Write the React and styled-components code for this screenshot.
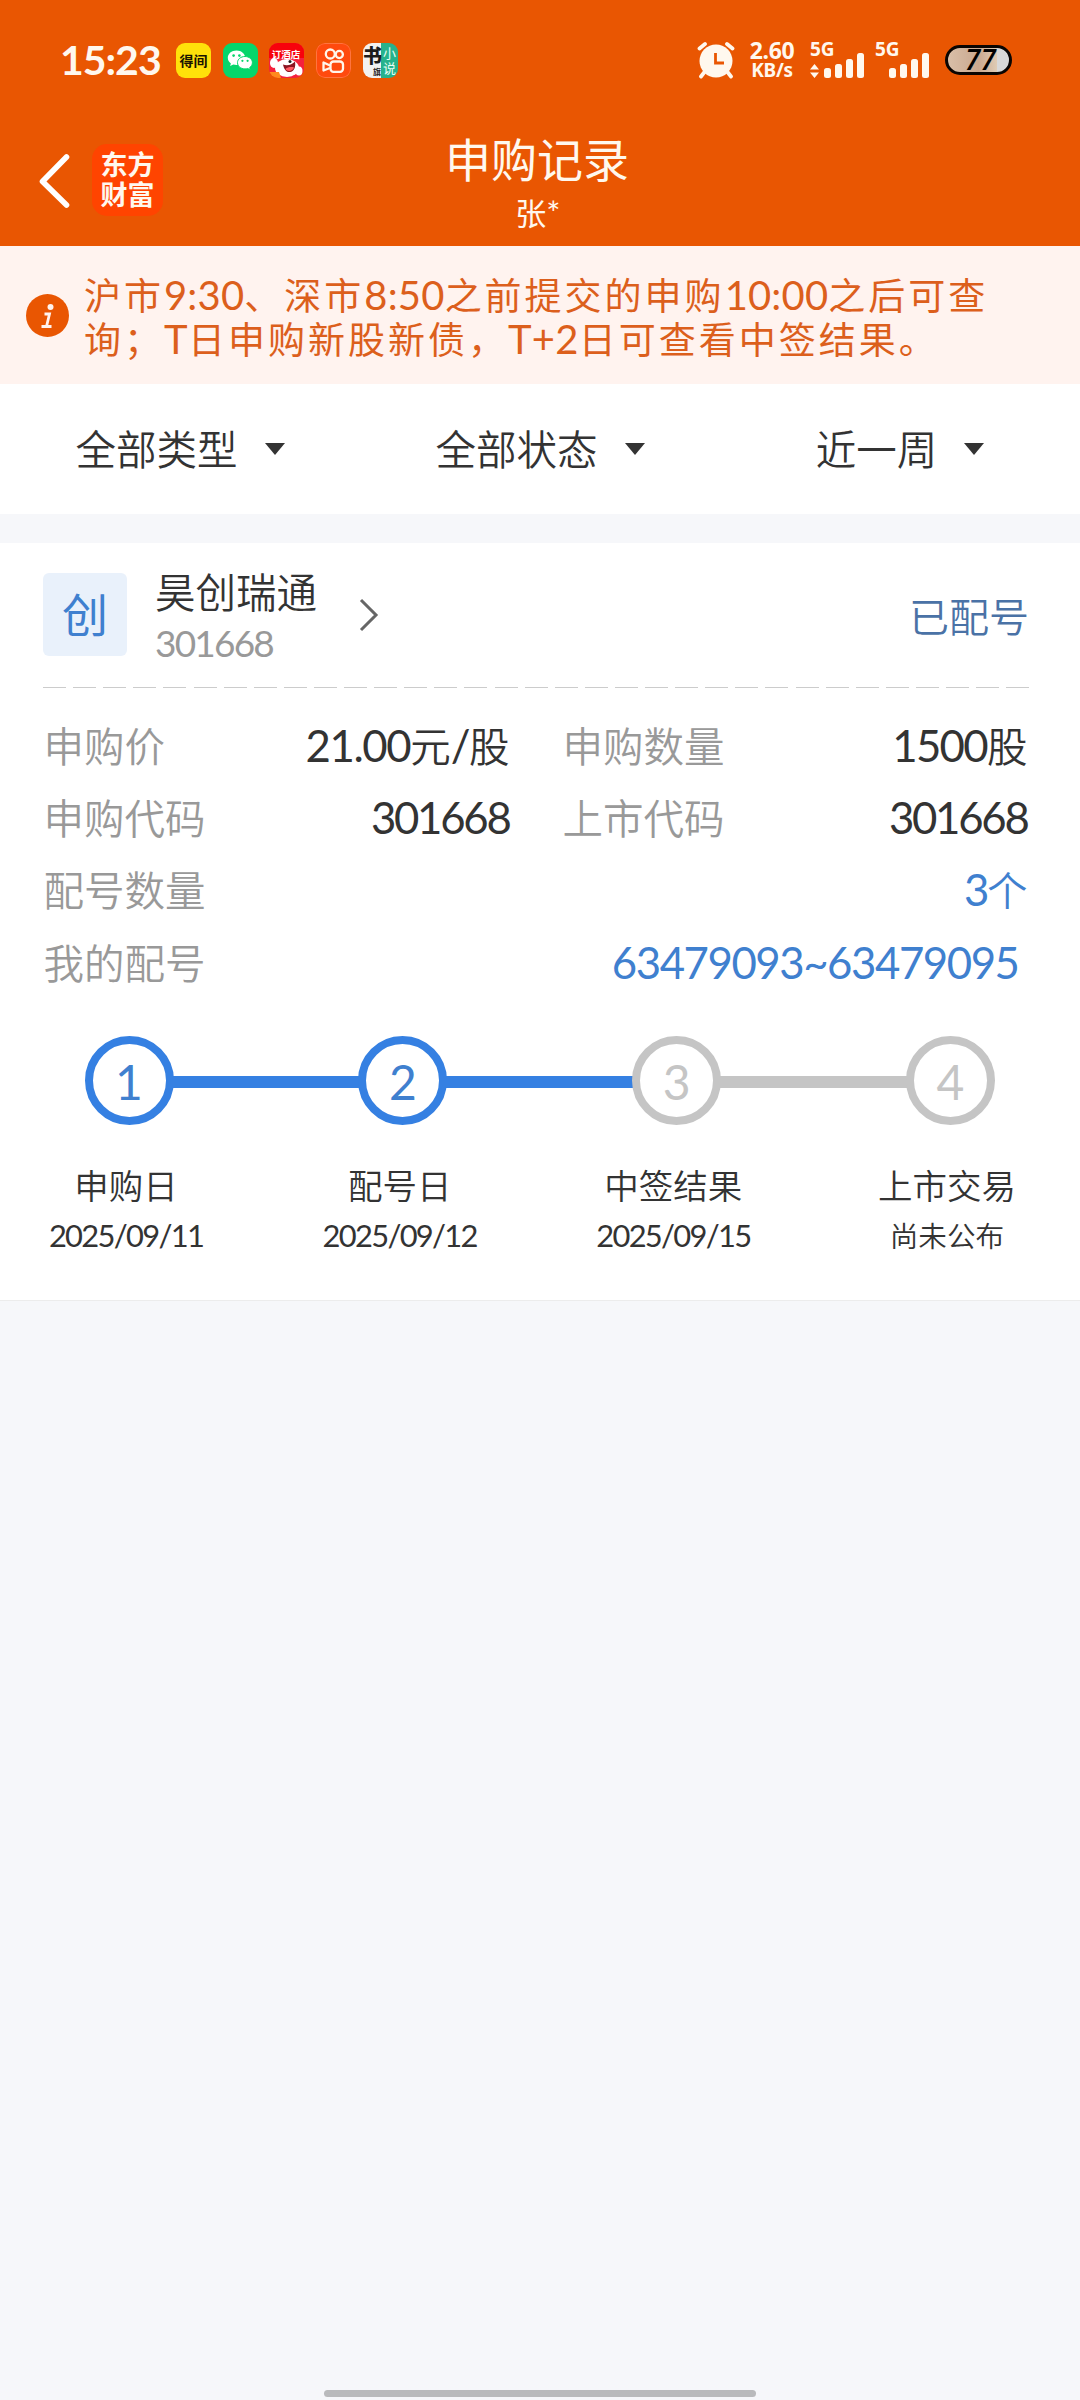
import React from 'react';
import styled, { createGlobalStyle } from 'styled-components';

const GlobalStyle = createGlobalStyle`
  * {
    box-sizing: border-box;
  }
  body {
    margin: 0;
    background: #f6f7fa;
    font-family: 'Noto Sans CJK SC', sans-serif;
    font-weight: 350;
    color: #333;
  }
`;

const Page = styled.div`
  display: flex;
  flex-direction: column;
  width: 1080px;
  height: 2400px;
  overflow: hidden;
  background: #f6f7fa;
`;

// Latin letters and digits inside Chinese text
const Latin = styled.span`
  font-family: Lato, sans-serif;
  font-size: 1.08em;
  font-weight: 400;
  line-height: 0;
  letter-spacing: ${(p) => p.$spacing || '-0.052em'};
`;

const Mixed = ({ children, spacing }) =>
  children
    .split(/([\dA-Z:./~*+]+)/)
    .filter(Boolean)
    .map((part, i) =>
      /^[\dA-Z:./~*+]/.test(part) ? (
        <Latin key={i} $spacing={spacing}>{part}</Latin>
      ) : (
        <React.Fragment key={i}>{part}</React.Fragment>
      )
    );

// Header
const Header = styled.header`
  height: 246px;
  background: #e95602;
  color: #fff8ee;
`;

const StatusBar = styled.div`
  display: flex;
  align-items: center;
  height: 120px;
  padding: 0 68px 0 60px;
`;

const Clock = styled.div`
  width: 116px;
  font: 700 41px/44px Lato, sans-serif;
  letter-spacing: -1px;
  white-space: nowrap;
`;

const AppIcons = styled.div`
  display: flex;
  gap: 11.7px;
`;

const StatusRight = styled.div`
  display: flex;
  align-items: center;
  margin-left: auto;
`;

const Speed = styled.div`
  width: 50px;
  margin: 0 13px 0 12px;
  text-align: center;
  font: 700 23px/20px 'Noto Sans', sans-serif;
  letter-spacing: -0.3px;
  white-space: nowrap;
`;

const SpeedUnit = styled.div`
  font-size: 19px;
  line-height: 20px;
`;

const Signal = styled.div`
  display: grid;
  width: 54px;
  height: 36px;
  margin-right: ${(p) => p.$gap}px;

  > * {
    grid-area: 1 / 1;
  }
`;

const Network = styled.span`
  font: 700 19px/15px 'Noto Sans', sans-serif;
`;

const Battery = styled.div`
  width: 67px;
  height: 30px;
  padding-left: 17px;
  border: 3px solid #0a0502;
  border-radius: 15px;
  background: linear-gradient(90deg, #d9bfa8 0, #c9a88f 50%, #dfcbb4 80%, #d8d8d8 80%);
  color: #000;
  font: italic 600 28px/23px 'Open Sans', sans-serif;
`;

const TitleBar = styled.div`
  display: grid;
  grid-template-columns: 200px 1fr 206px;
  height: 126px;
`;

const NavLeft = styled.div`
  display: flex;
  align-items: center;
  height: 72px;
  margin-top: 24px;
  padding-left: 38px;
`;

const Logo = styled.div`
  display: grid;
  place-content: center;
  width: 71px;
  height: 72px;
  margin-left: 20px;
  padding-bottom: 2px;
  border-radius: 15px;
  background: #ff4400;
  font-size: 27px;
  font-weight: 700;
  line-height: 30px;
`;

const Titles = styled.div`
  text-align: center;
`;

const Title = styled.h1`
  margin: 9px 0 0;
  font-size: 46px;
  font-weight: 400;
  line-height: 56px;
`;

const Account = styled.div`
  margin-top: 7px;
  font-size: 31px;
  font-weight: 400;
  line-height: 40px;
`;

// Notice
const Notice = styled.div`
  display: flex;
  align-items: center;
  height: 138px;
  padding: 0 26px;
  background: #fff3ef;
  color: #dc5f1c;
`;

const NoticeText = styled.p`
  margin: 1px 0 0 15px;
  font-size: 37px;
  font-weight: 400;
  line-height: 44px;
  letter-spacing: 3px;
  white-space: nowrap;
`;

// Filters
const Filters = styled.div`
  display: grid;
  grid-template-columns: repeat(3, 1fr);
  height: 130px;
  background: #fff;
`;

const Filter = styled.div`
  display: flex;
  align-items: center;
  justify-content: center;
  gap: 27px;
  font-size: 40.5px;
`;

const FilterName = styled.span`
  padding-bottom: 3px;
`;

const Caret = styled.i`
  border: 10px solid transparent;
  border-top: 12px solid #333;
  border-bottom: 0;
`;

// Record card
const Card = styled.section`
  height: 758px;
  margin-top: 29px;
  border-bottom: 1px solid #ececec;
  background: #fff;
`;

const CardHead = styled.div`
  display: flex;
  height: 144px;
  margin: 0 51px 0 43px;
  padding-top: 30px;
`;

const Badge = styled.div`
  width: 84px;
  height: 83px;
  border-radius: 6px;
  background: #e9f1fb;
  color: #3f80cf;
  text-align: center;
  font-size: 46px;
  font-weight: 400;
  line-height: 78px;
`;

const Stock = styled.div`
  width: 203px;
  margin: -10px 0 0 28px;
`;

const StockName = styled.div`
  font-size: 40.5px;
  line-height: 56px;
`;

const StockCode = styled.div`
  color: #999;
  font: 400 37px/48px Lato, sans-serif;
  letter-spacing: -1.8px;
`;

const Arrow = styled.svg`
  margin-top: 24px;
`;

const State = styled.div`
  margin-left: auto;
  color: #4a72a6;
  font-size: 40px;
  line-height: 85px;
`;

const Dashes = styled.div`
  height: 1px;
  margin: 0 51px 0 43px;
  background: repeating-linear-gradient(90deg, #ccc 0 23px, transparent 23px 30.1px);
`;

const Fields = styled.div`
  display: grid;
  grid-template-columns: 466px 465px;
  column-gap: 53px;
  grid-auto-rows: 72.3px;
  margin: 20.5px 0 0 43.5px;
`;

const Field = styled.div`
  display: flex;
  align-items: center;
  justify-content: space-between;
  grid-column: ${(p) => (p.$wide ? '1 / -1' : 'auto')};
  padding-right: ${(p) => p.$inset || 0}px;
  font-size: 40.5px;
  line-height: 60px;
  white-space: nowrap;
`;

const Label = styled.span`
  color: #999;
`;

const Value = styled.span`
  color: ${(p) => (p.$link ? '#3f80cf' : '#333')};
`;

// Progress
const Track = styled.div`
  display: flex;
  align-items: center;
  margin: 38.5px 0 0 84.5px;
`;

const Node = styled.div`
  width: 89px;
  height: 89px;
  border: 8.5px solid ${(p) => (p.$done ? '#3580e2' : '#c5c5c5')};
  border-radius: 50%;
  color: ${(p) => (p.$done ? '#3f80cf' : '#c5c5c5')};
  text-align: center;
  font: 400 48px/75px Lato, sans-serif;
`;

const Line = styled.div`
  width: 186.8px;
  height: 12px;
  margin: 2px -1px 0;
  background: ${(p) => (p.$done ? '#3580e2' : '#c5c5c5')};
`;

const StepLabels = styled.div`
  display: flex;
  justify-content: space-between;
  margin: 32px 33px 0 26px;
`;

const StepLabel = styled.div`
  width: 200px;
  text-align: center;
  font-size: 34.5px;
  line-height: 54px;
`;

const StepDate = styled.div`
  margin-top: 1px;
  font-size: 28.6px;
  line-height: 46px;
  white-space: nowrap;
`;

const HomeIndicator = styled.div`
  width: 432px;
  height: 7px;
  margin: auto auto 3px;
  border-radius: 4px;
  background: #b9babc;
`;

const Tile = ({ children }) => (
  <svg width="35" height="35" viewBox="0 0 35 35">
    <defs>
      <clipPath id="tile">
        <rect width="35" height="35" rx="9" />
      </clipPath>
    </defs>
    <g clipPath="url(#tile)">{children}</g>
  </svg>
);

const SignalBars = ({ arrows }) => (
  <svg width="54" height="36" viewBox="0 0 54 36" fill="#fff8ee">
    {arrows && <path d="M4.5 22 9 27.5H0zM4.5 36 9 30.5H0z" />}
    <rect x="14" y="26" width="7" height="10" rx="2.5" />
    <rect x="25" y="22" width="7" height="14" rx="2.5" />
    <rect x="36" y="17" width="7" height="19" rx="2.5" />
    <rect x="47" y="11" width="7" height="25" rx="2.5" />
  </svg>
);

const fields = [
  { label: '申购价', value: '21.00元/股', spacing: '-0.033em' },
  { label: '申购数量', value: '1500股', spacing: '-0.038em' },
  { label: '申购代码', value: '301668' },
  { label: '上市代码', value: '301668' },
  { label: '配号数量', value: '3个', wide: true },
  { label: '我的配号', value: '63479093~63479095', wide: true, inset: 9, spacing: '-0.033em' },
];

const steps = [
  { name: '申购日', date: '2025/09/11', done: true },
  { name: '配号日', date: '2025/09/12', done: true },
  { name: '中签结果', date: '2025/09/15', done: false },
  { name: '上市交易', date: '尚未公布', done: false },
];

const App = () => {
  return (
    <Page>
      <GlobalStyle />
      <Header>
        <StatusBar>
          <Clock>15:23</Clock>
          <AppIcons>
            <Tile>
              <rect width="35" height="35" fill="#ffe10a" />
              <text x="17.5" y="22.5" textAnchor="middle" fontSize="14" fontWeight="700" fill="#1a1400">得间</text>
            </Tile>
            <Tile>
              <rect width="35" height="35" fill="#05d66b" />
              <path d="M13.5 7.5c-5 0-8.7 3.2-8.7 7.3 0 2.4 1.2 4.3 3.1 5.6l-.8 2.7 3.2-1.5c1 .3 2 .4 3.2.4 5 0 8.7-3.2 8.7-7.2s-3.7-7.3-8.7-7.3z" fill="#fff" />
              <path d="M22 13.5c-4.3 0-7.5 2.7-7.5 6.2s3.2 6.2 7.5 6.2c1 0 1.9-.1 2.7-.4l2.6 1.3-.6-2.3c1.7-1.2 2.7-2.9 2.7-4.8 0-3.5-3.2-6.2-7.4-6.2z" fill="#fff" stroke="#05d66b" />
              <g fill="#05d66b">
                <circle cx="10.6" cy="12.6" r="1.3" />
                <circle cx="16.4" cy="12.6" r="1.3" />
                <circle cx="19.4" cy="17.8" r="1.1" />
                <circle cx="24.6" cy="17.8" r="1.1" />
              </g>
            </Tile>
            <Tile>
              <rect width="35" height="35" fill="#f5213c" />
              <rect width="35" height="15" fill="#f8020c" />
              <ellipse cx="5" cy="20" rx="4" ry="5" fill="#fff" />
              <ellipse cx="18" cy="25" rx="12" ry="9" fill="#fff" />
              <ellipse cx="30" cy="28" rx="3.5" ry="4.5" fill="#fff" />
              <path d="M14 21.5c4 1.5 9 .5 12-3 1 6-1 10-5 10.5s-6-3-7-7.5z" fill="#8c1420" />
              <path d="M16.5 26c2-2 6-2.5 8.5-1.5-1 3.5-6.5 5-8.5 1.5z" fill="#ff5a62" />
              <circle cx="21" cy="18.5" r="1.5" fill="#222" />
              <path d="M0 29h10l2 6H0z" fill="#ff8a1c" />
              <text x="17" y="14.5" textAnchor="middle" fontSize="9.5" fontWeight="700" fill="#fff">订酒店</text>
            </Tile>
            <Tile>
              <rect width="35" height="35" fill="#ff4a0e" />
              <rect x=".5" y=".5" width="34" height="34" rx="8.5" fill="none" stroke="#ff7440" />
              <g fill="none" stroke="#fff5ea" strokeWidth="2.3">
                <circle cx="14.3" cy="11" r="4.5" />
                <circle cx="23.3" cy="11.5" r="3.6" />
                <rect x="14.5" y="18.5" width="12.5" height="10.3" rx="3" />
                <path d="M14 22.5 7.5 19.5v8l6.5-2.5" strokeLinejoin="round" />
              </g>
            </Tile>
            <Tile>
              <rect width="18" height="35" fill="#f2f2f0" />
              <rect x="18" width="17" height="35" fill="#27b28c" />
              <text x="0" y="20" fontSize="19" fontWeight="900" fill="#1c1c1c">书</text>
              <text x="10" y="32" fontSize="8" fontWeight="700" fill="#1c1c1c">旗</text>
              <text x="20" y="15" fontSize="13" fontWeight="400" fill="#e9fff6">小</text>
              <text x="20" y="30" fontSize="13" fontWeight="400" fill="#e9fff6">说</text>
            </Tile>
          </AppIcons>
          <StatusRight>
            <svg width="38" height="38" viewBox="0 0 38 38" fill="none" stroke="#fff8ee" strokeLinecap="round">
              <circle cx="19" cy="20" r="16.5" fill="#fff8ee" stroke="none" />
              <path d="M2.5 7.5 8 3M35.5 7.5 30 3M7.5 31 4 35.5M30.5 31l3.5 4.5" strokeWidth="3.8" />
              <path d="M18.5 12v10H27" stroke="#e95602" strokeWidth="2.8" strokeLinecap="butt" />
            </svg>
            <Speed>
              2.60
              <SpeedUnit>KB/s</SpeedUnit>
            </Speed>
            <Signal $gap={11}>
              <Network>5G</Network>
              <SignalBars arrows />
            </Signal>
            <Signal $gap={16}>
              <Network>5G</Network>
              <SignalBars />
            </Signal>
            <Battery>77</Battery>
          </StatusRight>
        </StatusBar>
        <TitleBar>
          <NavLeft>
            <svg width="34" height="60" viewBox="0 0 34 60" fill="none">
              <path d="M28.5 7 4.5 31.5 28.5 55" stroke="#fff" strokeWidth="5.6" strokeLinecap="round" strokeLinejoin="round" />
            </svg>
            <Logo>
              <div>东方</div>
              <div>财富</div>
            </Logo>
          </NavLeft>
          <Titles>
            <Title>申购记录</Title>
            <Account><Mixed>张*</Mixed></Account>
          </Titles>
        </TitleBar>
      </Header>

      <Notice>
        <svg width="43" height="43" viewBox="0 0 43 43">
          <circle cx="21.5" cy="21.5" r="21.5" fill="#e95602" />
          <circle cx="24.5" cy="13" r="3" fill="#fff3ef" />
          <path d="M18.5 20h5l-3 12.5M15.5 32.5h10" fill="none" stroke="#fff3ef" strokeWidth="2.8" />
        </svg>
        <NoticeText>
          <Mixed spacing="0.2px">沪市9:30、深市8:50之前提交的申购10:00之后可查</Mixed>
          <br />
          <Mixed spacing="0.3px">询；T日申购新股新债，T+2日可查看中签结果。</Mixed>
        </NoticeText>
      </Notice>

      <Filters>
        {['全部类型', '全部状态', '近一周'].map((name) => (
          <Filter key={name}>
            <FilterName>{name}</FilterName>
            <Caret />
          </Filter>
        ))}
      </Filters>

      <Card>
        <CardHead>
          <Badge>创</Badge>
          <Stock>
            <StockName>昊创瑞通</StockName>
            <StockCode>301668</StockCode>
          </Stock>
          <Arrow width="22" height="36" viewBox="0 0 22 36" fill="none">
            <path d="M3 3 18 18 3 33" stroke="#666" strokeWidth="3" />
          </Arrow>
          <State>已配号</State>
        </CardHead>
        <Dashes />
        <Fields>
          {fields.map((f) => (
            <Field key={f.label} $wide={f.wide} $inset={f.inset}>
              <Label>{f.label}</Label>
              <Value $link={f.wide}><Mixed spacing={f.spacing}>{f.value}</Mixed></Value>
            </Field>
          ))}
        </Fields>
        <Track>
          {steps.map((s, i) => (
            <React.Fragment key={s.name}>
              {i > 0 && <Line $done={steps[i - 1].done} />}
              <Node $done={s.done}>{i + 1}</Node>
            </React.Fragment>
          ))}
        </Track>
        <StepLabels>
          {steps.map((s) => (
            <StepLabel key={s.name}>
              {s.name}
              <StepDate><Mixed spacing="-0.055em">{s.date}</Mixed></StepDate>
            </StepLabel>
          ))}
        </StepLabels>
      </Card>
      <HomeIndicator />
    </Page>
  );
};

export default App;
